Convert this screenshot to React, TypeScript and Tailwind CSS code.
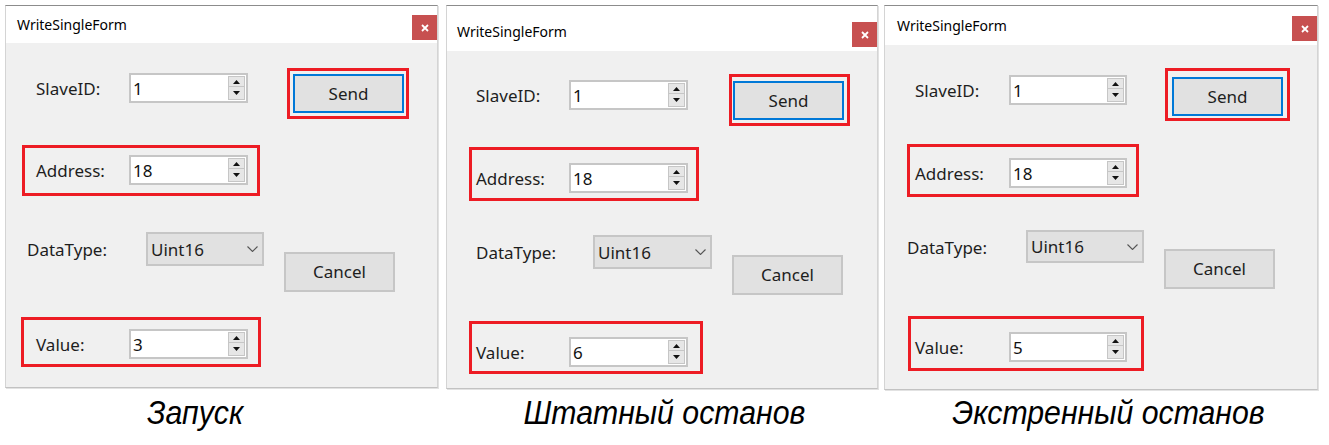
import React from "react";

const RED = "border-[#ed1c24]";
const UI = "font-['Noto_Sans','Open_Sans',sans-serif]";

function Up() {
  return (
    <svg width="7" height="4" viewBox="0 0 7 4">
      <polygon points="0,4 3.5,0 7,4" fill="#111" />
    </svg>
  );
}
function Down() {
  return (
    <svg width="7" height="4" viewBox="0 0 7 4">
      <polygon points="0,0 7,0 3.5,4" fill="#111" />
    </svg>
  );
}

function Spin({ value, w }: { value: string; w: string }) {
  return (
    <div className={`${w} h-[30px] shrink-0 bg-white border-2 border-[#c6c6c6] flex items-center pl-[2px] pr-px`}>
      <span className="flex-1 text-[17px] leading-none text-[#111]">{value}</span>
      <div className="w-[17px] h-[24px] flex flex-col">
        <div className="h-[11px] bg-[#e6e6e6] border border-[#c6c6c6] flex items-center justify-center">
          <Up />
        </div>
        <div className="h-[13px] bg-[#e6e6e6] border border-t-0 border-[#c6c6c6] flex items-center justify-center">
          <Down />
        </div>
      </div>
    </div>
  );
}

function Label({ text, w }: { text: string; w: string }) {
  return <span className={`${w} shrink-0 text-[17px] leading-[24px] text-[#1e1e1e] translate-y-[1px]`}>{text}</span>;
}

type Cfg = {
  outer: string;
  titleBar: string;
  bodyH: string;
  slave: string;
  labelW: string;
  inputW: string;
  addr: string;
  dt: string;
  dtLabelW: string;
  combo: string;
  val: string;
  value: string;
  send: string;
  cancel: string;
  caption: string;
  captionCls: string;
};

function Dialog({ c }: { c: Cfg }) {
  return (
    <div className={`${c.outer} shrink-0 flex flex-col`}>
      <div className={`${UI} border-t border-t-[#8c8c8c] border-x border-x-[#d4d4d4] border-b border-b-[#c2c2c2] shadow-[1px_1px_0_#e2e2e2]`}>
        <div className={`${c.titleBar} bg-white flex items-start justify-between`}>
          <span className="text-[14px] leading-[20px] text-black">WriteSingleForm</span>
          <div className="w-[25px] h-[25px] bg-[#c75050] flex items-center justify-center">
            <svg width="8" height="8" viewBox="0 0 8 8">
              <path d="M1 1L7 7M7 1L1 7" stroke="#fff" strokeWidth="1.8" />
            </svg>
          </div>
        </div>
        <div className={`${c.bodyH} bg-[#f0f0f0] flex items-start`}>
          <div className="w-[270px] shrink-0 flex flex-col items-start">
            <div className={`flex items-center ${c.slave}`}>
              <Label text="SlaveID:" w={c.labelW} />
              <Spin value="1" w={c.inputW} />
            </div>
            <div className={`border-[3px] ${RED} ${c.addr}`}>
              <div className="flex items-center">
                <Label text="Address:" w={c.labelW} />
                <Spin value="18" w={c.inputW} />
              </div>
            </div>
            <div className={`flex items-center ${c.dt}`}>
              <Label text="DataType:" w={c.dtLabelW} />
              <div className={`${c.combo} shrink-0 bg-[#e1e1e1] border-2 border-[#c6c6c6] flex items-center justify-between pl-[3px] pr-[4px]`}>
                <span className="text-[17px] leading-none text-[#1e1e1e]">Uint16</span>
                <svg width="11" height="6" viewBox="0 0 11 6">
                  <path d="M0.5 0.5L5.5 5.5L10.5 0.5" fill="none" stroke="#555" strokeWidth="1.1" />
                </svg>
              </div>
            </div>
            <div className={`border-[3px] ${RED} ${c.val}`}>
              <div className="flex items-center">
                <Label text="Value:" w={c.labelW} />
                <Spin value={c.value} w={c.inputW} />
              </div>
            </div>
          </div>
          <div className="flex flex-col items-start">
            <div className={`border-[3px] ${RED} ${c.send}`}>
              <div className="w-[111px] h-[39px] bg-[#e1e1e1] border-2 border-[#0078d7] flex items-center justify-center text-[17px] text-[#1e1e1e]">
                Send
              </div>
            </div>
            <div className={`w-[111px] h-[40px] bg-[#e1e1e1] border-2 border-[#c6c6c6] flex items-center justify-center text-[17px] text-[#1e1e1e] ${c.cancel}`}>
              Cancel
            </div>
          </div>
        </div>
      </div>
      <div className={`flex justify-center ${c.captionCls}`}>
        <span className="font-['Liberation_Sans',Arial,sans-serif] italic text-[34px] leading-none text-black whitespace-nowrap scale-x-[0.89]">
          {c.caption}
        </span>
      </div>
    </div>
  );
}

const panels: Cfg[] = [
  {
    outer: "w-[433px]",
    titleBar: "h-[37px] pt-[9px] pl-[11px]",
    bodyH: "h-[344px]",
    slave: "ml-[30px] mt-[30px]",
    labelW: "w-[93px]",
    inputW: "w-[119px]",
    addr: "ml-[16px] mt-[42px] w-[238px] pl-[11px] pt-[7px] pb-[8px]",
    dt: "ml-[21px] mt-[36px]",
    dtLabelW: "w-[119px]",
    combo: "w-[118px] h-[34px]",
    val: "ml-[15px] mt-[51px] w-[240px] pl-[12px] pt-[9px] pb-[5px]",
    value: "3",
    send: "ml-[11px] mt-[25px] w-[122px] pl-[3px] pt-[3px] pb-[3px]",
    cancel: "ml-[8px] mt-[133px]",
    caption: "Запуск",
    captionCls: "mt-[7px] mr-[52px]",
  },
  {
    outer: "w-[432px] ml-[8px]",
    titleBar: "h-[45px] pt-[16px] pl-[10px]",
    bodyH: "h-[337px]",
    slave: "ml-[29px] mt-[29px]",
    labelW: "w-[93px]",
    inputW: "w-[119px]",
    addr: "ml-[22px] mt-[37px] w-[230px] pl-[4px] pt-[13px] pb-[5px]",
    dt: "ml-[29px] mt-[34px]",
    dtLabelW: "w-[117px]",
    combo: "w-[119px] h-[34px]",
    val: "ml-[22px] mt-[52px] w-[234px] pl-[4px] pt-[13px] pb-[4px]",
    value: "6",
    send: "ml-[12px] mt-[23px] w-[121px] pl-[1px] pt-[4px] pb-[3px]",
    cancel: "ml-[15px] mt-[129px]",
    caption: "Штатный останов",
    captionCls: "mt-[6px] ml-[5px]",
  },
  {
    outer: "w-[434px] ml-[6px]",
    titleBar: "h-[39px] pt-[10px] pl-[12px]",
    bodyH: "h-[344px]",
    slave: "ml-[30px] mt-[30px]",
    labelW: "w-[94px]",
    inputW: "w-[118px]",
    addr: "ml-[22px] mt-[39px] w-[232px] pl-[5px] pt-[11px] pb-[6px]",
    dt: "ml-[22px] mt-[33px]",
    dtLabelW: "w-[119px]",
    combo: "w-[118px] h-[33px]",
    val: "ml-[23px] mt-[53px] w-[236px] pl-[4px] pt-[13px] pb-[6px]",
    value: "5",
    send: "ml-[10px] mt-[23px] w-[125px] pl-[4px] pt-[6px] pb-[2px]",
    cancel: "ml-[9px] mt-[128px]",
    caption: "Экстренный останов",
    captionCls: "mt-[5px] ml-[15px]",
  },
];

export default function App() {
  return (
    <div className="w-[1329px] h-[445px] bg-white flex items-start pl-[5px] pt-[5px] overflow-hidden">
      {panels.map((p, i) => (
        <Dialog key={i} c={p} />
      ))}
    </div>
  );
}
